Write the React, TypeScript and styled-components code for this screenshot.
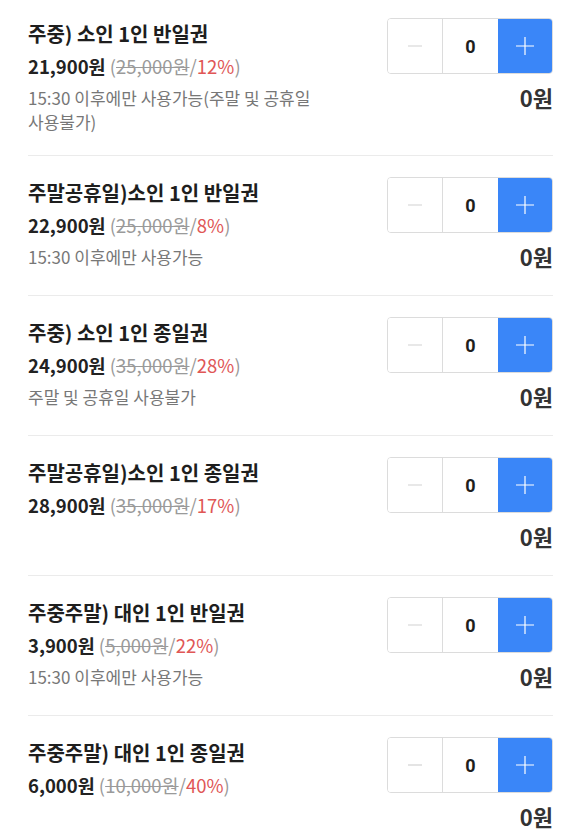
import React, { useState } from "react";
import styled, { createGlobalStyle } from "styled-components";

const GlobalStyle = createGlobalStyle`
  body {
    margin: 0;
    background: #fff;
    font-family: "Noto Sans CJK KR", "Noto Sans", Roboto, sans-serif;
    color: #222;
  }
`;

type Ticket = {
  name: string;
  price: number;
  original: number;
  rate: number;
  note?: string;
};

const TICKETS: Ticket[] = [
  {
    name: "주중) 소인 1인 반일권",
    price: 21900,
    original: 25000,
    rate: 12,
    note: "15:30 이후에만 사용가능(주말 및 공휴일 사용불가)",
  },
  {
    name: "주말공휴일)소인 1인 반일권",
    price: 22900,
    original: 25000,
    rate: 8,
    note: "15:30 이후에만 사용가능",
  },
  {
    name: "주중) 소인 1인 종일권",
    price: 24900,
    original: 35000,
    rate: 28,
    note: "주말 및 공휴일 사용불가",
  },
  { name: "주말공휴일)소인 1인 종일권", price: 28900, original: 35000, rate: 17 },
  {
    name: "주중주말) 대인 1인 반일권",
    price: 3900,
    original: 5000,
    rate: 22,
    note: "15:30 이후에만 사용가능",
  },
  { name: "주중주말) 대인 1인 종일권", price: 6000, original: 10000, rate: 40 },
];

const won = (n: number) => `${n.toLocaleString("ko-KR")}원`;

const TicketRow = ({ ticket }: { ticket: Ticket }) => {
  const [count, setCount] = useState(0);

  return (
    <Row>
      <Info>
        <Title>{ticket.name}</Title>
        <PriceLine>
          <Price>{won(ticket.price)}</Price>{" "}
          <Original>
            (<s>{won(ticket.original)}</s>/<Rate>{ticket.rate}%</Rate>)
          </Original>
        </PriceLine>
        {ticket.note && <Note>{ticket.note}</Note>}
      </Info>
      <Side>
        <Stepper>
          <StepButton onClick={() => setCount((c) => Math.max(0, c - 1))}>
            <svg width="16" height="16" viewBox="0 0 16 16">
              <path d="M1 8h14" stroke="#d2d2d2" strokeWidth="1.2" />
            </svg>
          </StepButton>
          <Count>{count}</Count>
          <StepButton $primary onClick={() => setCount((c) => c + 1)}>
            <svg width="20" height="20" viewBox="0 0 20 20">
              <path d="M1 10h18M10 1v18" stroke="#fff" strokeWidth="1.2" />
            </svg>
          </StepButton>
        </Stepper>
        <Total>{won(ticket.price * count)}</Total>
      </Side>
    </Row>
  );
};

export default function App() {
  return (
    <>
      <GlobalStyle />
      <List>
        {TICKETS.map((t) => (
          <TicketRow key={t.name} ticket={t} />
        ))}
      </List>
    </>
  );
}

const List = styled.div`
  padding: 0 27px 0 28px;
`;

const Row = styled.div`
  display: flex;
  justify-content: space-between;
  gap: 20px;
  padding: 21px 0 26px;
  border-bottom: 1px solid #ebebeb;

  &:first-child {
    padding: 18px 0 21px;
  }
`;

const Info = styled.div`
  flex: 1;
  min-width: 0;
  padding-top: 3px;
`;

const Title = styled.div`
  font-size: 20px;
  font-weight: 700;
  line-height: 26px;
  color: #1e1e1e;
`;

const PriceLine = styled.div`
  margin-top: 6px;
  font-size: 18.5px;
  line-height: 26px;
`;

const Price = styled.span`
  font-weight: 700;
  color: #222;
`;

const Original = styled.span`
  color: #9a9a9a;

  s {
    text-decoration-thickness: 1px;
  }
`;

const Rate = styled.span`
  color: #e05656;
`;

const Note = styled.div`
  margin-top: 7px;
  font-size: 17px;
  line-height: 24px;
  color: #777;
  word-break: keep-all;
`;

const Side = styled.div`
  display: flex;
  flex-direction: column;
  align-items: flex-end;
`;

const Stepper = styled.div`
  display: flex;
  width: 166px;
  height: 56px;
  border: 1px solid #dcdcdc;
  border-radius: 4px;
  overflow: hidden;
  box-sizing: border-box;
`;

const StepButton = styled.button<{ $primary?: boolean }>`
  flex: 1;
  display: flex;
  align-items: center;
  justify-content: center;
  border: none;
  padding: 0;
  margin: 0;
  background: ${({ $primary }) => ($primary ? "#3a86f8" : "#fff")};
  cursor: pointer;
`;

const Count = styled.div`
  flex: 1;
  display: flex;
  align-items: center;
  justify-content: center;
  border-left: 1px solid #dcdcdc;
  font-family: Roboto, "Noto Sans CJK KR", sans-serif;
  font-size: 18px;
  font-weight: 700;
  color: #1e1e1e;
`;

const Total = styled.div`
  margin-top: 11px;
  font-size: 22px;
  font-weight: 700;
  line-height: 25px;
  color: #333;
`;
